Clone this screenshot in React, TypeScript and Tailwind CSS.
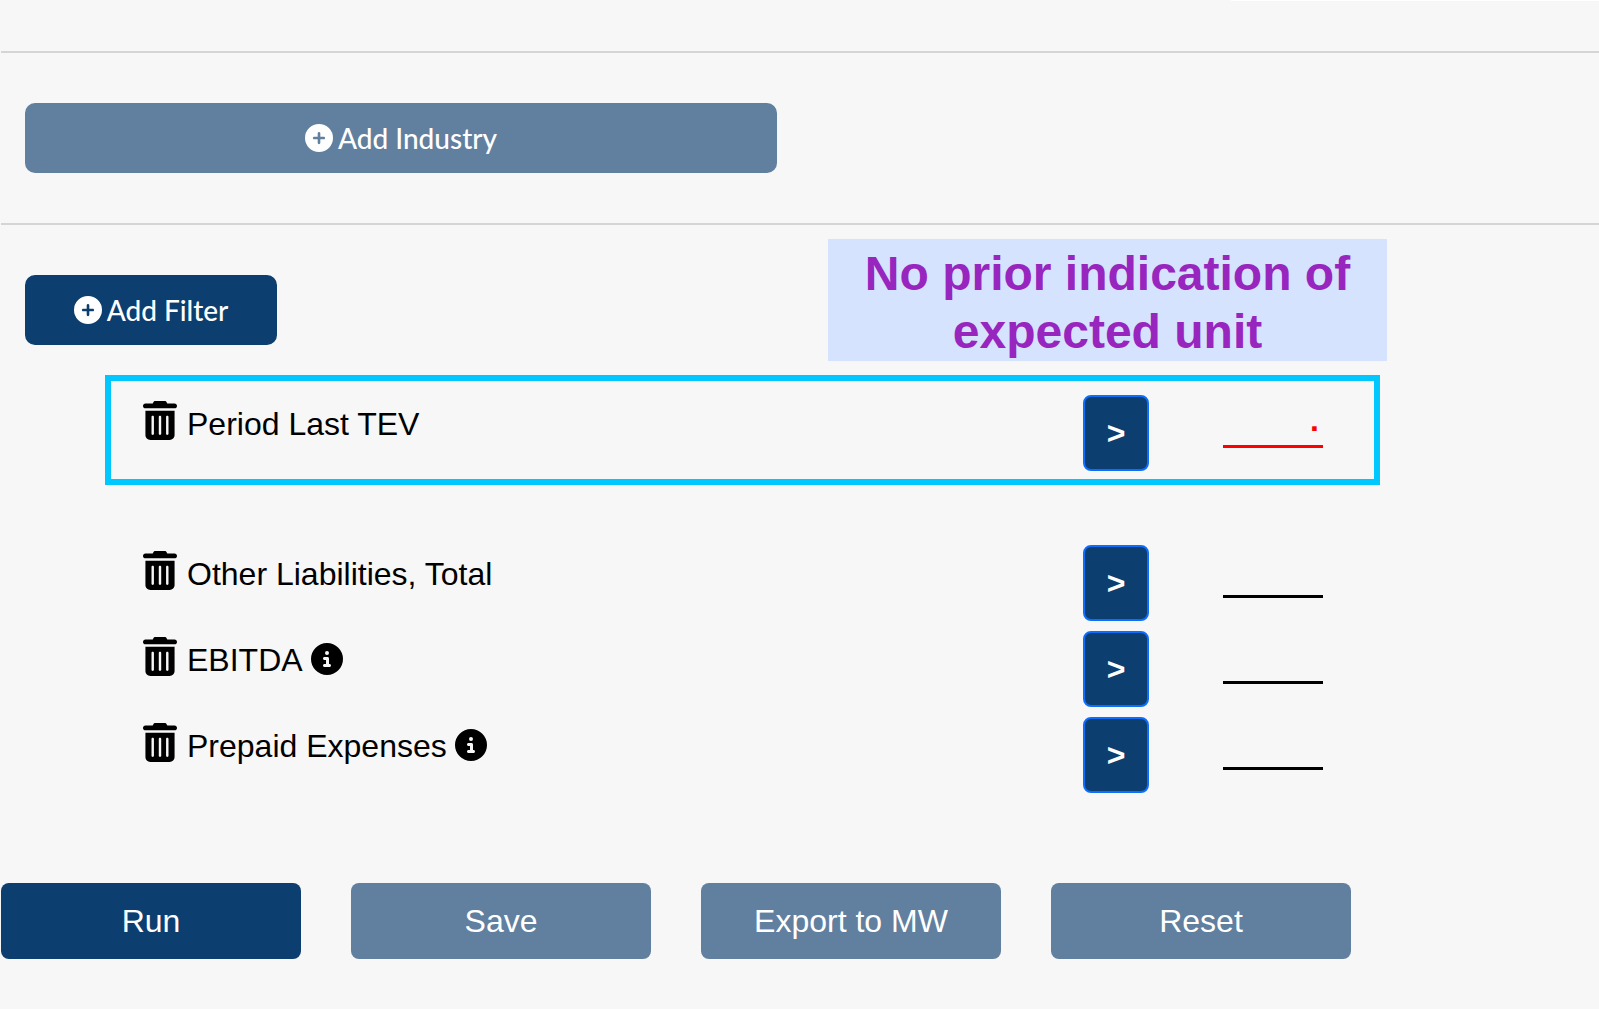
import { useState } from 'react';
import clsx from 'clsx';
import { FaCircleInfo, FaCirclePlus, FaTrashCan } from 'react-icons/fa6';

interface Filter {
  id: string;
  label: string;
  hasInfo?: boolean;
  value: string;
  invalid?: boolean;
}

interface FilterRowProps {
  filter: Filter;
  onChange: (id: string, value: string) => void;
}

const INITIAL_FILTERS: Filter[] = [
  { id: 'period-last-tev', label: 'Period Last TEV', value: '.', invalid: true },
  { id: 'other-liabilities', label: 'Other Liabilities, Total', value: '' },
  { id: 'ebitda', label: 'EBITDA', hasInfo: true, value: '' },
  { id: 'prepaid-expenses', label: 'Prepaid Expenses', hasInfo: true, value: '' },
];

const ACTIONS = [
  { label: 'Run', primary: true },
  { label: 'Save', primary: false },
  { label: 'Export to MW', primary: false },
  { label: 'Reset', primary: false },
];

function FilterRow({ filter, onChange }: FilterRowProps) {
  return (
    <div className="flex items-start">
      <div className="flex flex-1 items-start pt-1.5">
        <button type="button" aria-label={`Remove ${filter.label}`} className="shrink-0">
          <FaTrashCan className="h-[39px] w-[34px]" />
        </button>
        <label htmlFor={filter.id} className="ml-2.5 pt-1 text-[32px] leading-[38px]">
          {filter.label}
        </label>
        {filter.hasInfo && (
          <button type="button" aria-label={`About ${filter.label}`} className="ml-2 shrink-0 pt-1.5">
            <FaCircleInfo className="size-8" />
          </button>
        )}
      </div>
      <button
        type="button"
        aria-label="Comparison"
        className="h-[76px] w-[66px] shrink-0 rounded-lg border-2 border-[#0d6efd] bg-[#0c3e6f] text-[32px] font-bold text-white"
      >
        &gt;
      </button>
      <input
        id={filter.id}
        type="text"
        value={filter.value}
        onChange={(e) => onChange(filter.id, e.target.value)}
        className={clsx(
          'ml-[74px] h-[53px] w-[100px] shrink-0 border-b-[3px] bg-transparent pr-1 text-right text-[32px] font-bold leading-8 outline-none',
          filter.invalid ? 'border-[#ff0000] text-[#ff0000]' : 'border-black text-black',
        )}
      />
    </div>
  );
}

export default function App() {
  const [filters, setFilters] = useState<Filter[]>(INITIAL_FILTERS);
  const [firstFilter, ...otherFilters] = filters;

  function handleChange(id: string, value: string) {
    setFilters((current) => current.map((f) => (f.id === id ? { ...f, value } : f)));
  }

  return (
    <main className="min-h-screen bg-[#f7f7f7] pl-px font-['Liberation_Sans',Arial,sans-serif] text-black">
      <div className="ml-[77%] h-px bg-white" />

      {/* Industry */}
      <section className="mt-[50px] border-y-2 border-[#d5d5d5] px-6 py-[50px]">
        <button
          type="button"
          className="flex h-[70px] w-full max-w-[752px] items-center justify-center gap-[5px] rounded-[10px] bg-[#617f9f] font-[Lato,sans-serif] text-[28px] font-medium text-white"
        >
          <FaCirclePlus className="size-7" />
          Add Industry
        </button>
      </section>

      {/* Filters */}
      <section className="pt-3.5">
        <div className="flex max-w-[1386px] items-end justify-between pl-6">
          <button
            type="button"
            className="mb-4 flex h-[70px] w-[252px] items-center justify-center gap-[5px] rounded-[10px] bg-[#0c3e6f] font-[Lato,sans-serif] text-[28px] font-medium text-white"
          >
            <FaCirclePlus className="size-7" />
            Add Filter
          </button>
          <p className="w-[559px] bg-[#d5e3ff] pt-1.5 text-center text-[48px] font-bold leading-[58px] text-[#9826be]">
            No prior indication of
            <br />
            expected unit
          </p>
        </div>

        <div className="mt-3.5 ml-[104px] max-w-[1275px]">
          <div className="border-6 border-[#00c8ff] pt-3.5 pr-[51px] pb-2 pl-8">
            <FilterRow filter={firstFilter} onChange={handleChange} />
          </div>
          <div className="mt-[60px] flex flex-col gap-2.5 pr-[57px] pl-[38px]">
            {otherFilters.map((filter) => (
              <FilterRow key={filter.id} filter={filter} onChange={handleChange} />
            ))}
          </div>
        </div>
      </section>

      {/* Actions */}
      <div className="mt-[90px] grid max-w-[1350px] grid-cols-4 gap-[50px]">
        {ACTIONS.map((action) => (
          <button
            key={action.label}
            type="button"
            className={clsx(
              'h-[76px] rounded-lg text-[32px] text-white',
              action.primary ? 'bg-[#0c3e6f]' : 'bg-[#617f9f]',
            )}
          >
            {action.label}
          </button>
        ))}
      </div>
    </main>
  );
}
